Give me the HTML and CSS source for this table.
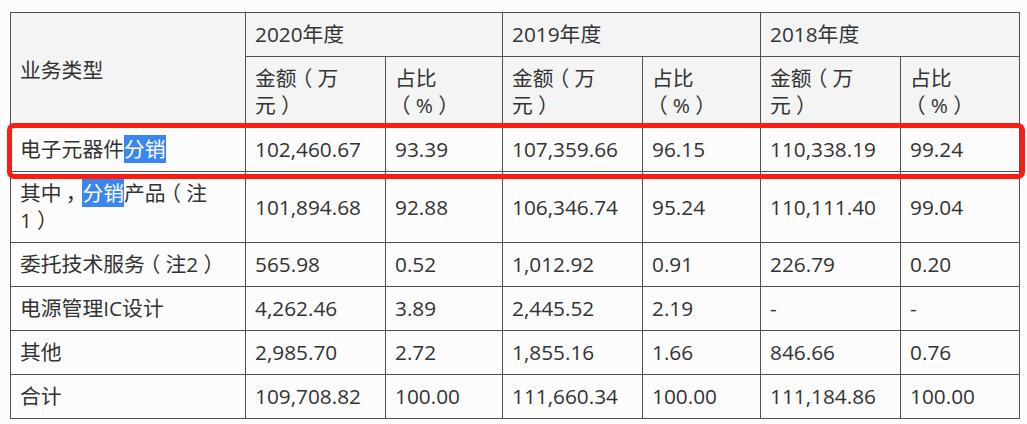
FILE: index.html
```html
<!DOCTYPE html>
<html lang="zh-CN">
<head>
<meta charset="utf-8">
<link rel="stylesheet" href="styles.css">
</head>
<body>
<div class="wrap">
<table class="t">
<colgroup>
<col class="c1"><col class="c2"><col class="c3"><col class="c4"><col class="c5"><col class="c6"><col class="c7">
</colgroup>
<thead>
<tr><th rowspan="2">业务类型</th><th colspan="2">2020年度</th><th colspan="2">2019年度</th><th colspan="2">2018年度</th></tr>
<tr><th>金额<span class="pp">（</span>万<br>元<span class="pp">）</span></th><th>占比<br><span class="pp">（</span>%<span class="pp">）</span></th><th>金额<span class="pp">（</span>万<br>元<span class="pp">）</span></th><th>占比<br><span class="pp">（</span>%<span class="pp">）</span></th><th>金额<span class="pp">（</span>万<br>元<span class="pp">）</span></th><th>占比<br><span class="pp">（</span>%<span class="pp">）</span></th></tr>
</thead>
<tbody>
<tr><td>电子元器件<span class="sel">分销</span></td><td>102,460.67</td><td>93.39</td><td>107,359.66</td><td>96.15</td><td>110,338.19</td><td>99.24</td></tr>
<tr><td>其中<span class="pm">，</span><span class="sel">分销</span>产品<span class="pp">（</span>注<br>1<span class="pp">）</span></td><td>101,894.68</td><td>92.88</td><td>106,346.74</td><td>95.24</td><td>110,111.40</td><td>99.04</td></tr>
<tr><td>委托技术服务<span class="pp">（</span>注2<span class="pp">）</span></td><td>565.98</td><td>0.52</td><td>1,012.92</td><td>0.91</td><td>226.79</td><td>0.20</td></tr>
<tr><td>电源管理IC设计</td><td>4,262.46</td><td>3.89</td><td>2,445.52</td><td>2.19</td><td>-</td><td>-</td></tr>
<tr><td>其他</td><td>2,985.70</td><td>2.72</td><td>1,855.16</td><td>1.66</td><td>846.66</td><td>0.76</td></tr>
<tr><td>合计</td><td>109,708.82</td><td>100.00</td><td>111,660.34</td><td>100.00</td><td>111,184.86</td><td>100.00</td></tr>
</tbody>
</table>
<div class="mark"></div>
</div>
</body>
</html>
```

FILE: styles.css
```css
html, body {
  margin: 0;
  padding: 0;
  background: #fcfcfc;
}
body {
  font-family: "Open Sans", "Noto Sans CJK SC", sans-serif;
  color: #333333;
}
.wrap {
  position: relative;
  padding: 12px 0 0 10px;
}
.t {
  border-collapse: collapse;
  table-layout: fixed;
  width: 1010px;
  font-size: 20.8px;
  line-height: 27px;
}
.c1 { width: 235px; }
.c2 { width: 140px; }
.c3 { width: 117px; }
.c4 { width: 140px; }
.c5 { width: 118px; }
.c6 { width: 140px; }
.c7 { width: 119px; }
.t th, .t td {
  border: 1px solid #505050;
  padding: 8px 9px 8px 9px;
  text-align: left;
  vertical-align: middle;
  font-weight: normal;
}
.t th {
  background: #f4f4f4;
}
.t td {
  background: #fcfcfc;
}
.pp {
  font-feature-settings: "halt" 1;
  padding: 0 0.25em;
}
.pm {
  font-feature-settings: "halt" 1;
  padding: 0 0.3em 0 0.2em;
}
.sel {
  background: #3a86ee;
  color: #ffffff;
}
.mark {
  position: absolute;
  left: 7px;
  top: 123px;
  width: 1008px;
  height: 46px;
  border: 5px solid #fb1c14;
  border-radius: 7px;
  pointer-events: none;
}
```
